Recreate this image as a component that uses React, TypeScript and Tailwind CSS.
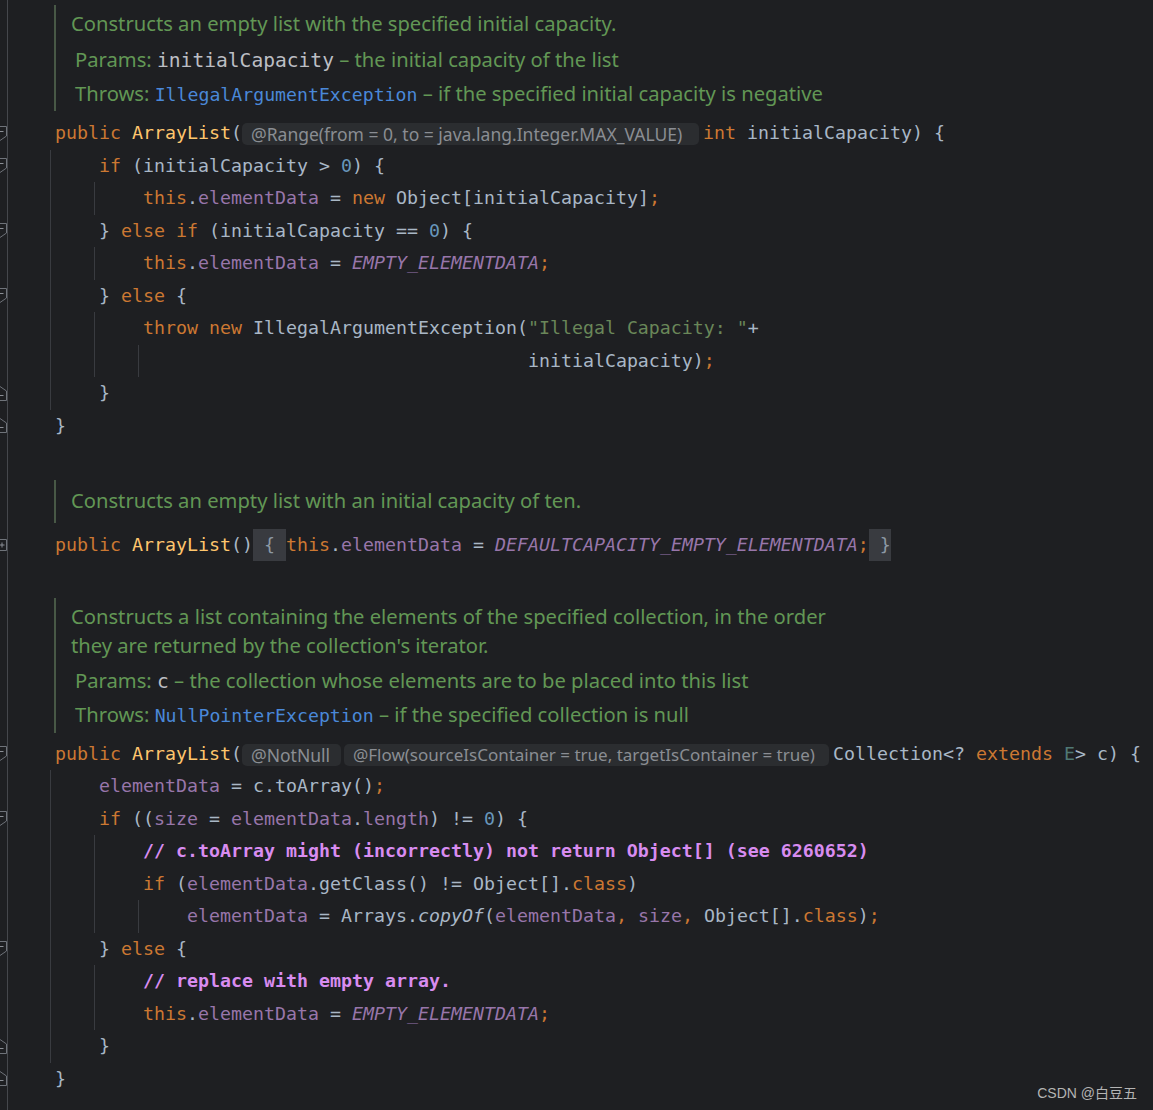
import type { ReactNode } from 'react';

const mono = "font-['DejaVu_Sans_Mono',monospace]";
const sans = "font-['Noto_Sans',sans-serif]";

type Mark = 'start' | 'end' | 'plus';

function FoldMark({ type }: { type: Mark }) {
  if (type === 'plus') {
    return (
      <svg width="7" height="12" viewBox="0 0 7 12" className="block">
        <path d="M0 0.5 H6.5 V11.5 H0" fill="#1e1f22" stroke="#6f737a" />
        <path d="M0 6 H4.5 M2 3.5 V8.5" stroke="#8a8e95" />
      </svg>
    );
  }
  if (type === 'end') {
    return (
      <svg width="7" height="15" viewBox="0 0 7 15" className="block">
        <path d="M0 0.5 L6.5 5 V14.5 H0" fill="#1e1f22" stroke="#6f737a" />
        <path d="M0 9.5 H3.5" stroke="#8a8e95" />
      </svg>
    );
  }
  return (
    <svg width="7" height="15" viewBox="0 0 7 15" className="block">
      <path d="M0 0.5 H6.5 V10 L0 14.5" fill="#1e1f22" stroke="#6f737a" />
      <path d="M0 5.5 H3.5" stroke="#8a8e95" />
    </svg>
  );
}

function Gutter({ mark }: { mark?: Mark }) {
  return (
    <div className="w-[8px] shrink-0 self-stretch border-r border-[#45474c] flex items-center">
      {mark && <FoldMark type={mark} />}
    </div>
  );
}

// code tokens
const K = ({ children }: { children: ReactNode }) => <span className="text-[#cc7832]">{children}</span>;
const Fn = ({ children }: { children: ReactNode }) => <span className="text-[#ffc66d]">{children}</span>;
const Fd = ({ children }: { children: ReactNode }) => <span className="text-[#9876aa]">{children}</span>;
const Fi = ({ children }: { children: ReactNode }) => <span className="text-[#9876aa] italic">{children}</span>;
const N = ({ children }: { children: ReactNode }) => <span className="text-[#6897bb]">{children}</span>;
const S = ({ children }: { children: ReactNode }) => <span className="text-[#6a8759]">{children}</span>;
const C = ({ children }: { children: ReactNode }) => <span className="text-[#d88cf0] font-bold">{children}</span>;

function Inlay({ w, size = 'text-[17.5px]', children }: { w: string; size?: string; children: ReactNode }) {
  return (
    <span
      className={`inline-block align-middle ${w} h-[22px] leading-[22px] pl-[9px] whitespace-nowrap overflow-hidden rounded-[5px] bg-[#2b2d30] text-[#8a8d93] ${size} ${sans}`}
    >
      {children}
    </span>
  );
}

function Fold({ children }: { children: ReactNode }) {
  return <span className="inline-block align-top h-[32px] leading-[32px] bg-[#393b40] text-[#8d99a5]">{children}</span>;
}

function Line({ guides = [], mark, children }: { guides?: boolean[]; mark?: Mark; children?: ReactNode }) {
  return (
    <div className="flex h-[32.5px]">
      <Gutter mark={mark} />
      <div className="flex pl-[42px]">
        {guides.map((g, i) => (
          <span key={i} className={`w-[44px] shrink-0 self-stretch ${g ? 'border-l border-[#393b40]' : ''}`} />
        ))}
        <div className={`pl-[5px] whitespace-pre leading-[32.5px] text-[18.27px] text-[#a9b7c6] ${mono}`}>{children}</div>
      </div>
    </div>
  );
}

function Doc({
  mt,
  h,
  pt,
  outer,
  desc,
  tags,
}: {
  mt: string;
  h: string;
  pt: string;
  outer: string;
  desc: string[];
  tags?: ReactNode[];
}) {
  return (
    <div className={`flex ${outer}`}>
      <Gutter />
      <div className="pl-[46px]">
        <div className={`border-l-2 border-[#485846] pl-[15px] ${mt} ${h} ${pt} text-[#629755] text-[20.2px] ${sans}`}>
          {desc.map((d, i) => (
            <div key={i} className="leading-[29px] whitespace-nowrap">
              {d}
            </div>
          ))}
          {tags && (
            <div className="mt-[4.5px] pl-[4px]">
              {tags.map((t, i) => (
                <div key={i} className="leading-[33px] whitespace-nowrap">
                  {t}
                </div>
              ))}
            </div>
          )}
        </div>
      </div>
    </div>
  );
}

const PName = ({ children }: { children: ReactNode }) => (
  <span className={`text-[#bcbec4] text-[19.6px] ${mono}`}>{children}</span>
);
const Link = ({ children }: { children: ReactNode }) => (
  <span className={`text-[#4a88d8] text-[18.2px] ${mono}`}>{children}</span>
);

export default function App() {
  const g1 = [true];
  const g2 = [true, true];
  const g3 = [true, true, true];

  return (
    <div className="relative w-[1153px] h-[1110px] overflow-hidden bg-[#1e1f22]">
      <Doc
        outer="h-[117px]"
        mt="mt-[5px]"
        h="h-[106px]"
        pt="pt-[4px]"
        desc={['Constructs an empty list with the specified initial capacity.']}
        tags={[
          <>
            Params: <PName>initialCapacity</PName> – the initial capacity of the list
          </>,
          <>
            Throws: <Link>IllegalArgumentException</Link> – if the specified initial capacity is negative
          </>,
        ]}
      />

      <Line mark="start">
        <K>public</K> <Fn>ArrayList</Fn>(<Inlay w="w-[457px]">@Range(from = 0, to = java.lang.Integer.MAX_VALUE)</Inlay>
        <span className="inline-block w-[4px]" />
        <K>int</K> initialCapacity) {'{'}
      </Line>
      <Line guides={g1} mark="start">
        <K>if</K> (initialCapacity {'>'} <N>0</N>) {'{'}
      </Line>
      <Line guides={g2}>
        <K>this</K>.<Fd>elementData</Fd> = <K>new</K> Object[initialCapacity]<K>;</K>
      </Line>
      <Line guides={g1} mark="start">
        {'} '}
        <K>else if</K> (initialCapacity == <N>0</N>) {'{'}
      </Line>
      <Line guides={g2}>
        <K>this</K>.<Fd>elementData</Fd> = <Fi>EMPTY_ELEMENTDATA</Fi>
        <K>;</K>
      </Line>
      <Line guides={g1} mark="start">
        {'} '}
        <K>else</K> {'{'}
      </Line>
      <Line guides={g2}>
        <K>throw new</K> IllegalArgumentException(<S>"Illegal Capacity: "</S>+
      </Line>
      <Line guides={g3}>
        {'                               '}initialCapacity)<K>;</K>
      </Line>
      <Line guides={g1} mark="end">
        {'}'}
      </Line>
      <Line mark="end">{'}'}</Line>
      <Line />

      <Doc
        outer="h-[54px]"
        mt="mt-[5.5px]"
        h="h-[42.5px]"
        pt="pt-[5.5px]"
        desc={['Constructs an empty list with an initial capacity of ten.']}
      />

      <Line mark="plus">
        <K>public</K> <Fn>ArrayList</Fn>()<Fold>{' { '}</Fold>
        <K>this</K>.<Fd>elementData</Fd> = <Fi>DEFAULTCAPACITY_EMPTY_ELEMENTDATA</Fi>
        <K>;</K>
        <Fold>{' }'}</Fold>
      </Line>
      <Line />

      <Doc
        outer="h-[144px]"
        mt="mt-[4.5px]"
        h="h-[134.5px]"
        pt="pt-[3.5px]"
        desc={[
          'Constructs a list containing the elements of the specified collection, in the order',
          "they are returned by the collection's iterator.",
        ]}
        tags={[
          <>
            Params: <PName>c</PName> – the collection whose elements are to be placed into this list
          </>,
          <>
            Throws: <Link>NullPointerException</Link> – if the specified collection is null
          </>,
        ]}
      />

      <Line mark="start">
        <K>public</K> <Fn>ArrayList</Fn>(<Inlay w="w-[99px]">@NotNull</Inlay>
        <span className="inline-block w-[3px]" />
        <Inlay w="w-[485px]" size="text-[17px]">
          @Flow(sourceIsContainer = true, targetIsContainer = true)
        </Inlay>
        <span className="inline-block w-[4px]" />
        Collection&lt;? <K>extends</K> <span className="text-[#507874]">E</span>&gt; c) {'{'}
      </Line>
      <Line guides={g1}>
        <Fd>elementData</Fd> = c.toArray()<K>;</K>
      </Line>
      <Line guides={g1} mark="start">
        <K>if</K> ((<Fd>size</Fd> = <Fd>elementData</Fd>.<Fd>length</Fd>) != <N>0</N>) {'{'}
      </Line>
      <Line guides={g2}>
        <C>// c.toArray might (incorrectly) not return Object[] (see 6260652)</C>
      </Line>
      <Line guides={g2}>
        <K>if</K> (<Fd>elementData</Fd>.getClass() != Object[].<K>class</K>)
      </Line>
      <Line guides={g3}>
        <Fd>elementData</Fd> = Arrays.<span className="italic">copyOf</span>(<Fd>elementData</Fd>
        <K>,</K> <Fd>size</Fd>
        <K>,</K> Object[].<K>class</K>)<K>;</K>
      </Line>
      <Line guides={g1} mark="start">
        {'} '}
        <K>else</K> {'{'}
      </Line>
      <Line guides={g2}>
        <C>// replace with empty array.</C>
      </Line>
      <Line guides={g2}>
        <K>this</K>.<Fd>elementData</Fd> = <Fi>EMPTY_ELEMENTDATA</Fi>
        <K>;</K>
      </Line>
      <Line guides={g1} mark="end">
        {'}'}
      </Line>
      <Line mark="end">{'}'}</Line>
      <Line />

      <div className="absolute right-[16px] bottom-[6px] text-[14px] text-[#b4b4b4] font-['Liberation_Sans','Noto_Sans_CJK_SC',sans-serif]">
        CSDN @白豆五
      </div>
    </div>
  );
}
